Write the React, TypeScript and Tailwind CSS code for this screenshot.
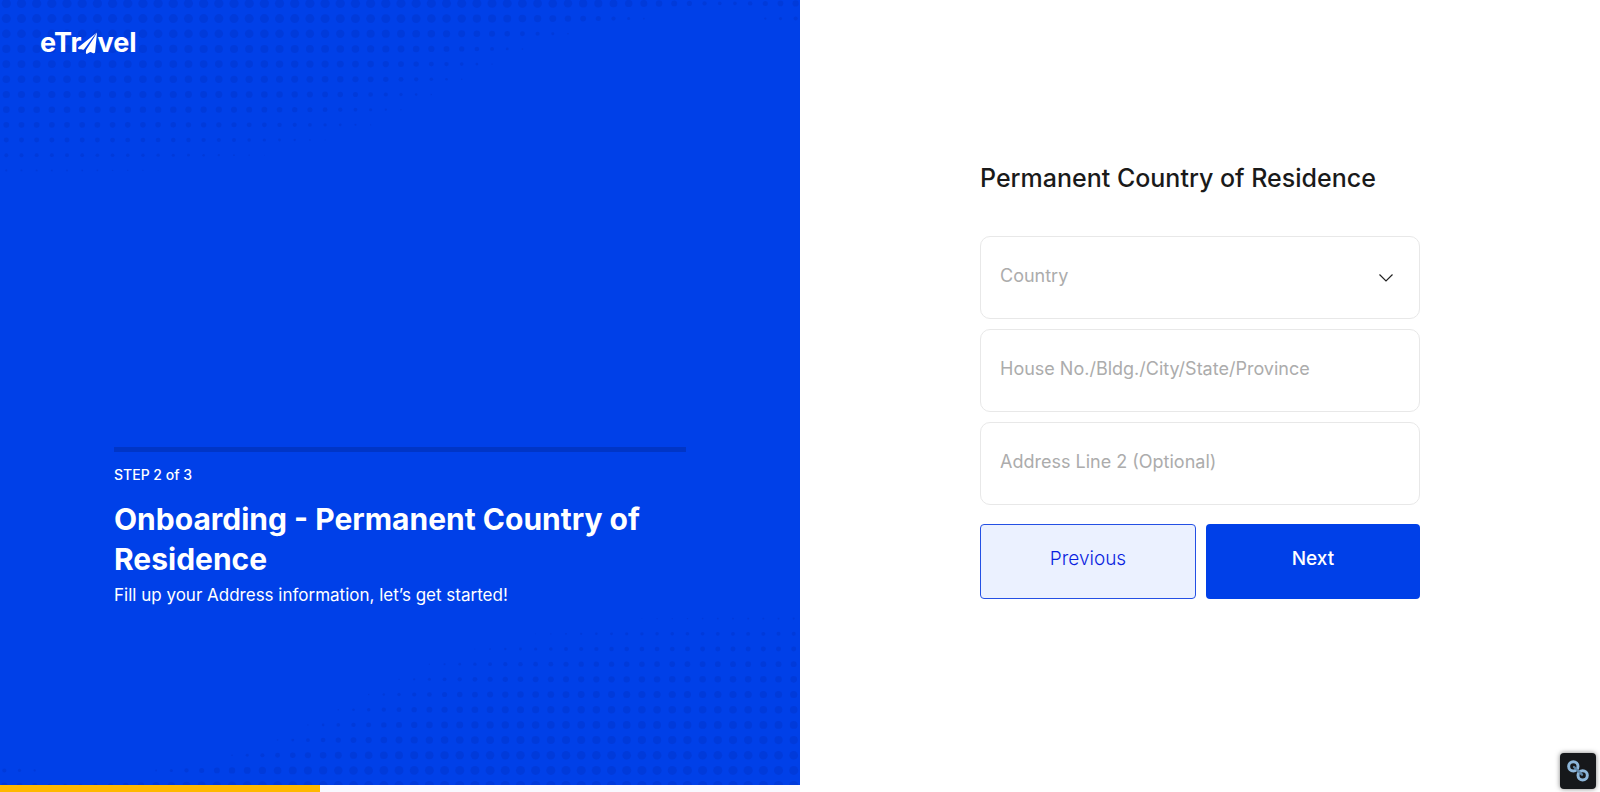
import React, { useState } from "react";
import { clsx } from "clsx";

// right-most x at which each dot row fades out, with the row's largest radius
const dotRows = [
  { end: 740, max: 4.6, min: 1.8 },
  { end: 650, max: 4.5 },
  { end: 574, max: 4.3 },
  { end: 528, max: 4.1 },
  { end: 497, max: 3.9 },
  { end: 467, max: 3.8 },
  { end: 437, max: 3.6 },
  { end: 407, max: 3.3 },
  { end: 376, max: 2.9 },
  { end: 331, max: 2.5 },
  { end: 270, max: 2 },
  { end: 185, max: 1.1 },
];

const STEP = 15.18;

function getDots() {
  const dots: { x: number; y: number; r: number }[] = [];
  dotRows.forEach((row, i) => {
    for (let n = 0; n < 53; n++) {
      const x = 6.3 + n * STEP;
      let r = row.min ?? 0;
      if (x < row.end) {
        r = Math.max(r, row.max * (1 - Math.exp(-(row.end + 10 - x) / 75)));
      }
      // a second cluster starts in the far corner
      if (i === 0 && x > 735) r = 1.9 + (x - 735) / 50;
      if (i === 1 && x > 760) r = 1 + (x - 760) / 35;
      if (r > 0.3) dots.push({ x, y: 3.4 + i * STEP, r });
    }
  });
  return dots;
}

const dots = getDots();

function DotPattern({ className }: { className: string }) {
  return (
    <svg
      viewBox="0 0 800 180"
      aria-hidden="true"
      className={clsx("absolute w-[800px] h-[180px] pointer-events-none", className)}
    >
      {dots.map((d) => (
        <circle key={`${d.x}-${d.y}`} cx={d.x} cy={d.y} r={d.r} fill="#0038d6" opacity={0.75} />
      ))}
    </svg>
  );
}

function Logo() {
  return (
    <a href="#" aria-label="eTravel" className="relative flex items-end text-[27px] leading-8 font-bold text-white">
      <span>eTr</span>
      <svg viewBox="230 98 64 70" className="-ml-1 -mr-px w-[21px] h-[28px] pb-1" fill="white" aria-hidden="true">
        <path d="M291 101 L234 146 Q231 150 236 152 L243 152 Q247 154 251 153 L280 114 L291 101 Z" />
        <path d="M291 101 L285 161 Q284 165 279 164 L275 162 Q271 159 267 162 L261 166 Q257 167 257 162 L258 154 L282 116 Z" />
      </svg>
      <span>vel</span>
    </a>
  );
}

const fieldClass =
  "w-full h-[83px] px-[19px] pb-1 rounded-[10px] border border-[#e8e8e8] bg-white text-[18px] text-[#222] placeholder:text-[#acacac] focus:outline-none focus:border-[#0040e8]";

export default function App() {
  const [country, setCountry] = useState("");
  const [address, setAddress] = useState("");
  const [addressLine2, setAddressLine2] = useState("");

  return (
    <div className="flex min-h-screen bg-white font-['Inter',sans-serif]">
      {/* Left panel */}
      <div className="w-1/2 flex flex-col">
        <div className="relative flex-1 flex flex-col overflow-hidden bg-[#0040e8] text-white">
          <DotPattern className="left-0 top-0" />
          <DotPattern className="right-0 -bottom-1 rotate-180" />

          <header className="flex px-10 pt-[27px]">
            <Logo />
          </header>

          <div className="relative mt-auto px-[114px] pb-[178px]">
            <div className="h-[5px] bg-[#0035c6]" />
            <p className="mt-[13px] text-[14px] leading-5 font-medium">STEP 2 of 3</p>
            <h1 className="mt-[14px] text-[30px] leading-10 font-bold">
              Onboarding - Permanent Country of Residence
            </h1>
            <p className="mt-1 text-[17px] leading-6">
              Fill up your Address information, let’s get started!
            </p>
          </div>
        </div>

        {/* Progress */}
        <div
          role="progressbar"
          aria-label="Onboarding progress"
          aria-valuenow={40}
          className="h-[7px] bg-[#f9f9ff]"
        >
          <div className="h-full w-2/5 bg-[#ffb800]" />
        </div>
      </div>

      {/* Form */}
      <main className="w-1/2 flex justify-center pt-[158px]">
        <form onSubmit={(e) => e.preventDefault()} className="w-[55%]">
          <h2 className="text-[25px] leading-10 font-medium text-[#1a1a1a]">
            Permanent Country of Residence
          </h2>

          <div className="mt-[38px] flex flex-col gap-[10px]">
            <div className="relative">
              <select
                aria-label="Country"
                value={country}
                onChange={(e) => setCountry(e.target.value)}
                className={clsx(fieldClass, "appearance-none", !country && "text-[#acacac]")}
              >
                <option value="">Country</option>
                <option value="PH">Philippines</option>
              </select>
              <svg
                viewBox="0 0 14 8"
                className="absolute right-[27px] top-[38px] w-[14px] h-2 pointer-events-none"
                fill="none"
                stroke="#222"
                strokeWidth="1.2"
                aria-hidden="true"
              >
                <path d="M0.5 0.5 L7 7 L13.5 0.5" />
              </svg>
            </div>
            <input
              type="text"
              aria-label="House No./Bldg./City/State/Province"
              placeholder="House No./Bldg./City/State/Province"
              value={address}
              onChange={(e) => setAddress(e.target.value)}
              className={fieldClass}
            />
            <input
              type="text"
              aria-label="Address Line 2 (Optional)"
              placeholder="Address Line 2 (Optional)"
              value={addressLine2}
              onChange={(e) => setAddressLine2(e.target.value)}
              className={fieldClass}
            />
          </div>

          <div className="mt-[19px] flex gap-[10px]">
            <button
              type="button"
              className="flex-1 h-[75px] pb-1 rounded border border-[#2450e4] bg-[#ebf1ff] text-[19px] font-light text-[#0a1fe0]"
            >
              Previous
            </button>
            <button
              type="submit"
              className="flex-1 h-[75px] pb-1 rounded bg-[#0040e8] text-[19px] font-medium text-white"
            >
              Next
            </button>
          </div>
        </form>
      </main>

      {/* Floating link button */}
      <button
        type="button"
        aria-label="Copy link"
        className="fixed right-1 bottom-[3px] w-9 h-9 rounded bg-[#16181b] shadow-[0_0_5px_rgba(0,0,0,0.5)]"
      >
        <svg viewBox="0 0 108 108" className="w-9 h-9" fill="none" aria-hidden="true">
          <circle cx="40" cy="40" r="14" stroke="#8db6da" strokeWidth="9" />
          <circle cx="68" cy="67" r="14" stroke="#8db6da" strokeWidth="9" />
          <path d="M42 42 L66 65" stroke="#5f86a8" strokeWidth="7" strokeLinecap="round" />
        </svg>
      </button>
    </div>
  );
}
